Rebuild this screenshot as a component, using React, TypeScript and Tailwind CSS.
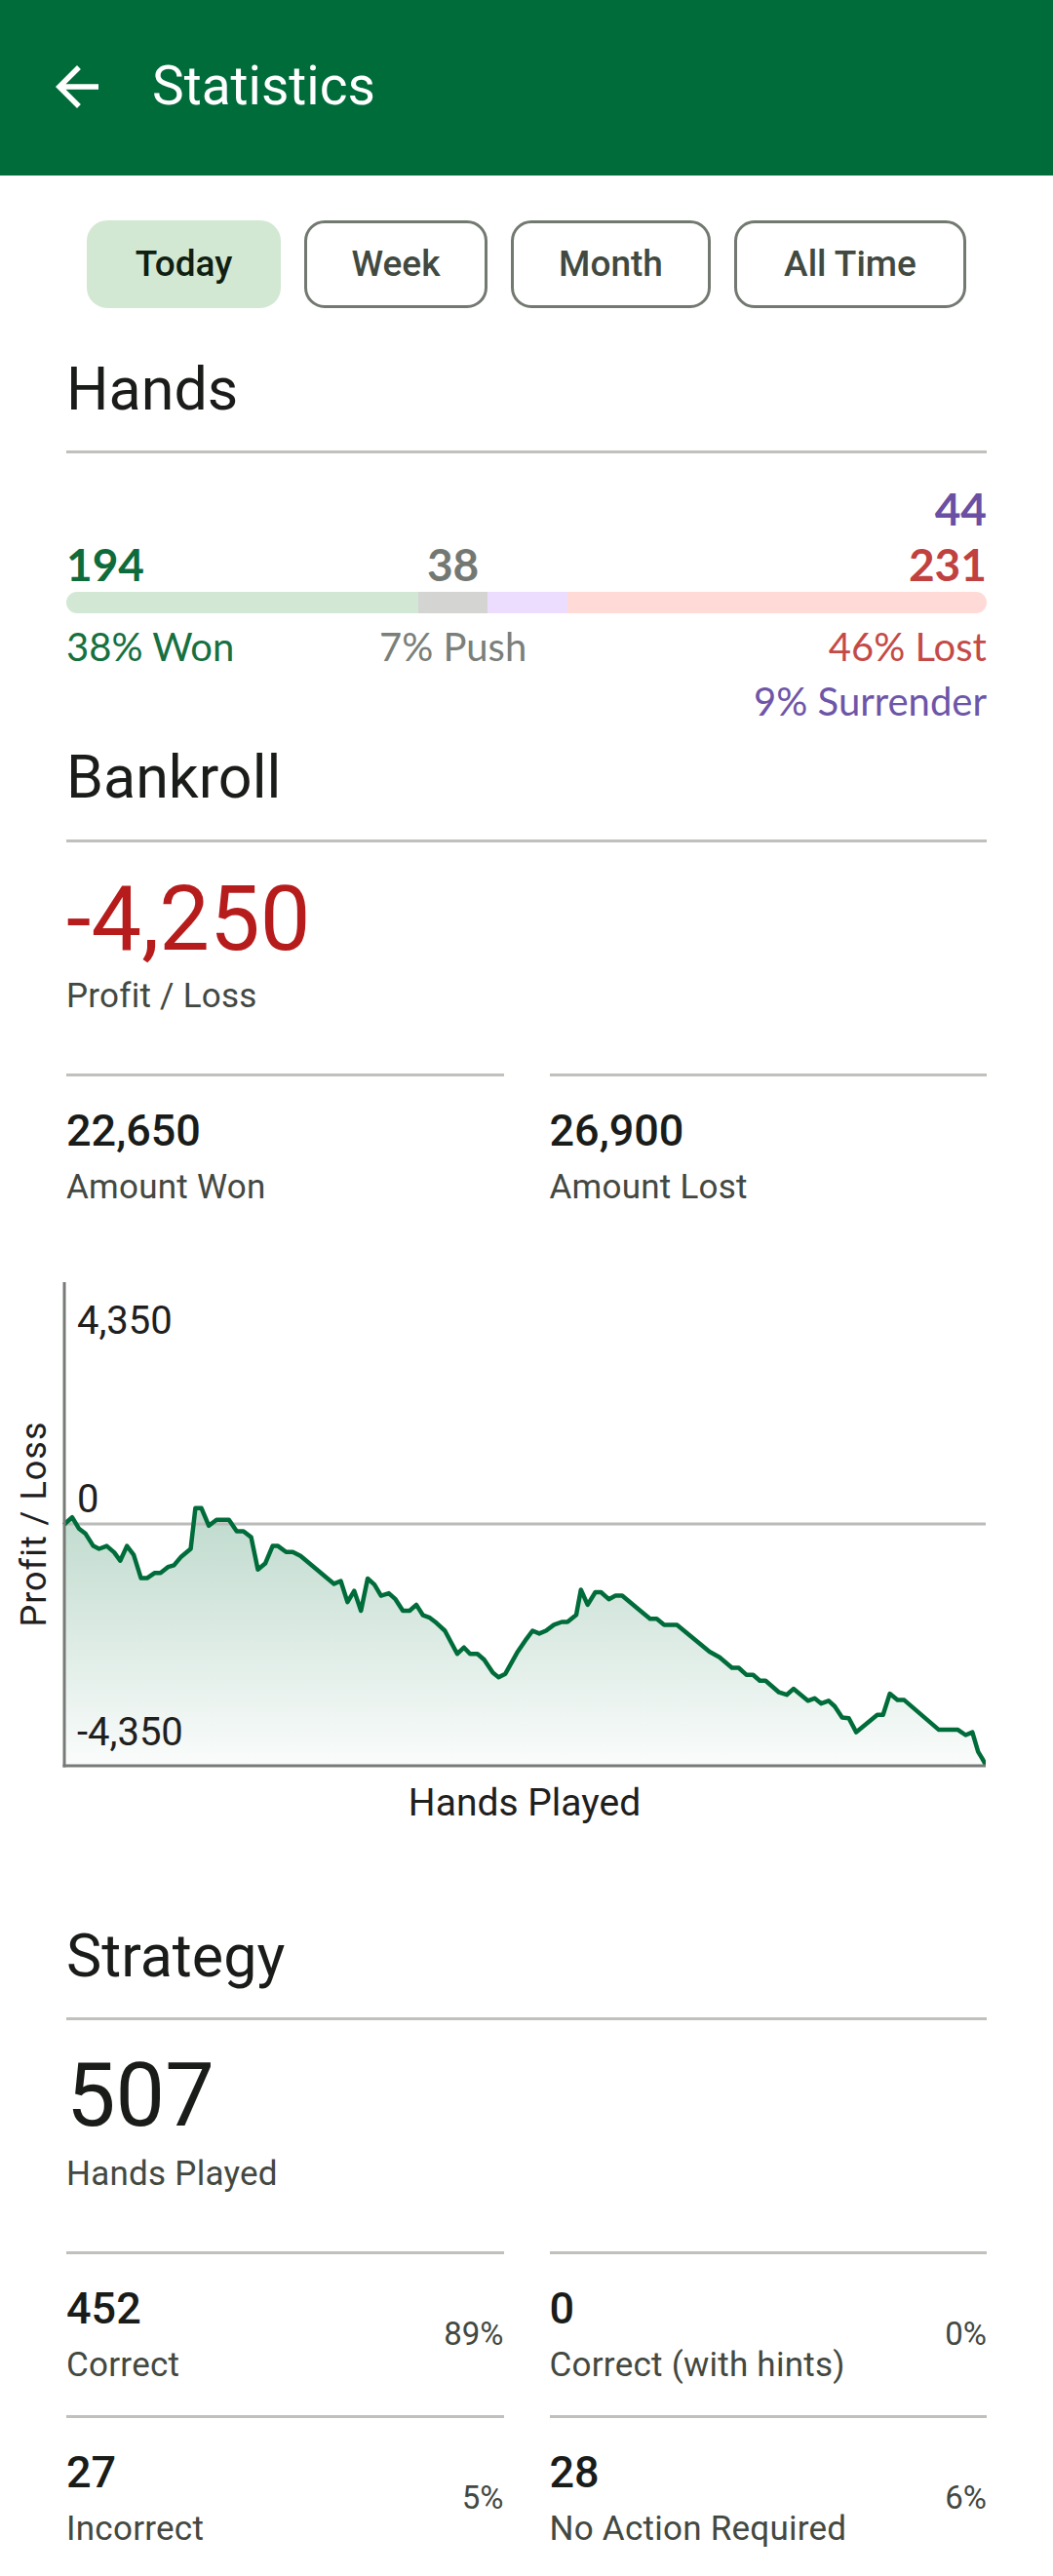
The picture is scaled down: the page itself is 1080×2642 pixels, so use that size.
const points: [number, number][] = [
  [0, 249], [1.1, 247.3], [8, 241.2], [14.9, 252.7], [21.8, 258.1], [29.7, 270.6], [35.6, 273.5], [43.5, 270.6],
  [51.1, 277.1], [57.3, 285.7], [64.2, 270.6], [71.1, 279.6], [78.6, 303.6], [84.8, 303.6], [92.4, 298.3],
  [98.6, 298.3], [106.2, 292.2], [112.4, 290.4], [120, 281.4], [129.6, 273.5], [134.4, 231.8], [140.6, 231.8],
  [148.2, 249.8], [156.1, 243.7], [168.8, 243.7], [176.8, 255.5], [183.7, 255.5], [191.6, 261.6], [198.5, 294.7],
  [206, 288.6], [213.6, 270.6], [219.1, 270.6], [227.4, 276.7], [234.3, 276.7], [242.2, 280.7], [276.6, 309.4],
  [283.5, 306.5], [290.4, 328.1], [297.3, 316.6], [304.2, 337], [311.1, 304], [318, 310.1], [324.8, 321.6],
  [332.8, 319.1], [339.6, 325.2], [347.2, 337], [354.1, 337], [361, 330.9], [367.9, 341.7], [374.8, 344.2],
  [381.7, 349.6], [390.3, 357.5], [403, 381.2], [409.9, 374.7], [416.1, 381.2], [423.7, 381.2], [430.6, 387.3],
  [439.5, 400.6], [445.4, 405.2], [452.3, 401.7], [464.3, 380.1], [474, 365.8], [480.2, 357.5], [487.1, 360.4],
  [494, 357.5], [502.2, 351.4], [510.2, 348.5], [516, 348.5], [525, 341.3], [529.8, 315.5], [536.7, 330.9],
  [544.6, 318], [550.4, 318], [558.4, 325.2], [565.3, 321.6], [572.1, 321.6], [592.8, 338.8], [600.7, 345.3],
  [607.6, 345.3], [615.2, 351.4], [628.3, 351.4], [661.7, 379], [672, 384.8], [684.7, 395.5], [691.6, 395.5],
  [699.5, 402.7], [706.4, 402.7], [713.3, 408.8], [719.2, 408.8], [733, 420.7], [740.9, 423.2], [747.8, 417.1],
  [762.6, 429.3], [769.5, 426.8], [776.3, 432.2], [783.9, 429.3], [790.1, 435], [797.7, 446.5], [804.6, 447.2],
  [812.2, 461.6], [833.8, 443.7], [839.7, 443.7], [846.6, 422.1], [854.5, 428.6], [861.4, 428.6], [896.9, 459.1],
  [916.5, 459.1], [924.4, 464.5], [931.3, 461.6], [937.2, 481.7], [941.6, 488.9], [945, 495],
];

const hands = { won: 194, push: 38, surrender: 44, lost: 231 };
const total = hands.won + hands.push + hands.surrender + hands.lost;
const pct = (n: number) => `${(n / total) * 100}%`;

const ranges = [
  { label: "Today", width: "w-[199px]" },
  { label: "Week", width: "w-[188px]" },
  { label: "Month", width: "w-[205px]" },
  { label: "All Time", width: "w-[238px]" },
];

function Divider() {
  return <div className="h-[3px] bg-[#bfc1bd]" />;
}

function Heading({ children, className = "" }: { children: string; className?: string }) {
  return <h2 className={`text-[61px] leading-[80px] text-[#1a1c19] ${className}`}>{children}</h2>;
}

function Stat({ value, label, percent }: { value: string; label: string; percent?: string }) {
  return (
    <div>
      <Divider />
      <div className="flex items-center justify-between pb-[29px]">
        <div>
          <div className="mt-[28px] text-[45px] leading-[56px] font-medium text-[#1a1c19]">{value}</div>
          <div className="mt-[8px] text-[35px] leading-[44px] tracking-[0.25px] text-[#434841]">{label}</div>
        </div>
        {percent && <div className="mt-[28px] text-[33px] leading-[44px] text-[#434841]">{percent}</div>}
      </div>
    </div>
  );
}

function Chart() {
  const ox = 66;
  const oy = 14;
  const w = 945;
  const h = 496;
  const line = "M" + points.map(([x, y]) => `${ox + x},${oy + y}`).join(" L");
  const area = `${line} L${ox + w},${oy + h} L${ox},${oy + h} Z`;
  return (
    <svg width={1011} height={570} className="block -ml-[68px] mt-[32px]">
      <defs>
        <linearGradient id="pl-fill" x1="0" y1="262" x2="0" y2="510" gradientUnits="userSpaceOnUse">
          <stop offset="0" stopColor="#006c3a" stopOpacity="0.24" />
          <stop offset="1" stopColor="#006c3a" stopOpacity="0.02" />
        </linearGradient>
      </defs>
      <path d={area} fill="url(#pl-fill)" />
      <line x1={66} y1={262} x2={1011} y2={262} stroke="#b9bcb8" strokeWidth={3} />
      <path d={line} fill="none" stroke="#006c3a" strokeWidth={4.5} strokeLinejoin="round" />
      <line x1={66} y1={14} x2={66} y2={511.5} stroke="#777a76" strokeWidth={3} />
      <line x1={64.5} y1={510} x2={1011} y2={510} stroke="#777a76" strokeWidth={3} />
      <g fontFamily="Roboto, sans-serif" fontSize={40} fill="#1f201e">
        <text x={79} y={67}>4,350</text>
        <text x={79} y={250}>0</text>
        <text x={79} y={489}>-4,350</text>
        <text transform="translate(47 262) rotate(-90)" textAnchor="middle" fontSize={36} letterSpacing={1}>
          Profit / Loss
        </text>
        <text x={538} y={561} textAnchor="middle" fontSize={39}>
          Hands Played
        </text>
      </g>
    </svg>
  );
}

export default function App() {
  return (
    <div className="w-[1080px] min-h-[2642px] bg-white font-['Roboto',sans-serif]">
      <header className="h-[180px] bg-[#006c3a] flex items-center pb-[3px]">
        <svg width={66} height={66} viewBox="0 0 24 24" className="ml-[46px]" fill="#ffffff">
          <path d="M20 11H7.83l5.59-5.59L12 4l-8 8 8 8 1.41-1.41L7.83 13H20v-2z" />
        </svg>
        <h1 className="ml-[44px] text-[55px] leading-none text-white">Statistics</h1>
      </header>

      <div className="px-[68px]">
        <div className="mt-[46px] flex justify-center gap-6">
          {ranges.map((r, i) => (
            <button
              key={r.label}
              className={`${r.width} h-[90px] rounded-[21px] border-[3px] text-[37px] font-medium ${
                i === 0
                  ? "bg-[#d3e8d3] border-[#d3e8d3] text-[#0f1f12]"
                  : "bg-white border-[#727970] text-[#414940]"
              }`}
            >
              {r.label}
            </button>
          ))}
        </div>

        <Heading className="mt-[43px]">Hands</Heading>
        <div className="mt-[23px]">
          <Divider />
        </div>

        <div className="font-['Lato',sans-serif]">
          <div className="mt-[32px] text-right text-[46px] leading-[50px] font-bold text-[#6a4fa3]">
            {hands.surrender}
          </div>
          <div className="mt-[7px] flex text-[46px] leading-[50px] font-bold">
            <div style={{ width: pct(hands.won) }} className="text-[#0e6b3b]">{hands.won}</div>
            <div style={{ width: pct(hands.push) }} className="flex justify-center text-[#737873]">{hands.push}</div>
            <div style={{ width: pct(hands.surrender) }} />
            <div style={{ width: pct(hands.lost) }} className="text-right text-[#c0413f]">{hands.lost}</div>
          </div>
          <div className="mt-[3px] flex h-[22px] rounded-full overflow-hidden">
            <div style={{ width: pct(hands.won) }} className="bg-[#d3e8d4]" />
            <div style={{ width: pct(hands.push) }} className="bg-[#d4d5d2]" />
            <div style={{ width: pct(hands.surrender) }} className="bg-[#ecdcfd]" />
            <div style={{ width: pct(hands.lost) }} className="bg-[#ffdad6]" />
          </div>
          <div className="mt-[9px] flex text-[40px] leading-[50px] whitespace-nowrap">
            <div style={{ width: pct(hands.won) }} className="text-[#16703f]">38% Won</div>
            <div style={{ width: pct(hands.push) }} className="flex justify-center text-[#7a7f7a]">7% Push</div>
            <div style={{ width: pct(hands.surrender) }} />
            <div style={{ width: pct(hands.lost) }} className="text-right text-[#c44a47]">46% Lost</div>
          </div>
          <div className="mt-[6px] text-right text-[40px] leading-[50px] text-[#6e55a8]">9% Surrender</div>
        </div>

        <Heading className="mt-[13px]">Bankroll</Heading>
        <div className="mt-[24px]">
          <Divider />
        </div>
        <div className="mt-[24px] text-[92px] leading-[110px] text-[#b71c1c]">-4,250</div>
        <div className="mt-[2px] text-[35px] leading-[44px] tracking-[0.25px] text-[#434841]">Profit / Loss</div>

        <div className="mt-[57px] grid grid-cols-2 gap-x-[47px]">
          <Stat value="22,650" label="Amount Won" />
          <Stat value="26,900" label="Amount Lost" />
        </div>

        <Chart />

        <Heading className="mt-[95px]">Strategy</Heading>
        <div className="mt-[23px]">
          <Divider />
        </div>
        <div className="mt-[26px] text-[90px] leading-[104px] text-[#1a1c19]">507</div>
        <div className="mt-[6px] text-[35px] leading-[44px] tracking-[0.25px] text-[#434841]">Hands Played</div>

        <div className="mt-[57px] grid grid-cols-2 gap-x-[47px]">
          <Stat value="452" label="Correct" percent="89%" />
          <Stat value="0" label="Correct (with hints)" percent="0%" />
          <Stat value="27" label="Incorrect" percent="5%" />
          <Stat value="28" label="No Action Required" percent="6%" />
        </div>
      </div>
    </div>
  );
}
